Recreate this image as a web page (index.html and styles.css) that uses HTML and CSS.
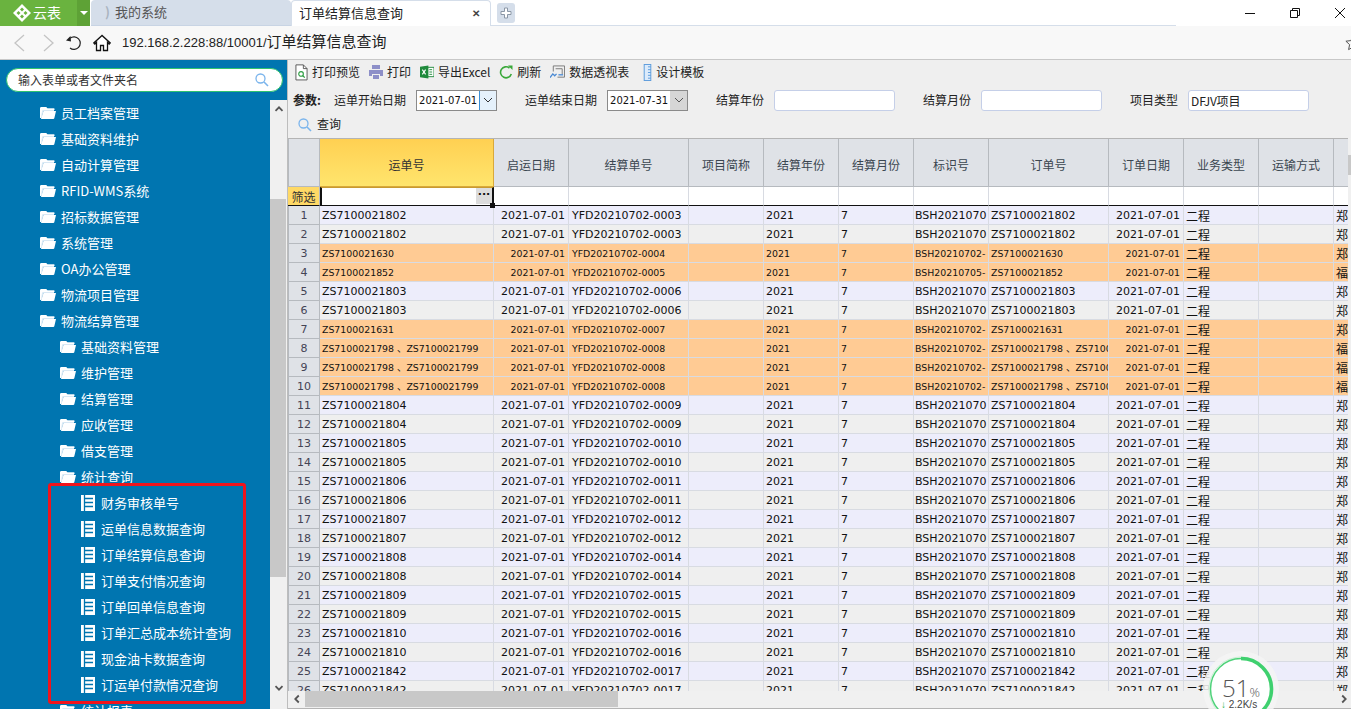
FILE: index.html
```html
<!DOCTYPE html>
<html lang="zh">
<head>
<meta charset="utf-8">
<title>订单结算信息查询</title>
<link rel="stylesheet" href="styles.css">
</head>
<body>
<svg class="defs" width="0" height="0">
  <symbol id="folder" viewBox="0 0 16 14">
    <path d="M1 1h5l1.500 1.500H14V5H3.500L1.500 12.500H1z" fill="#d8e8f4"/>
    <path d="M0 2.500C0 1.500.6 1 1.300 1H6l1.500 1.500H14.500V4H3.200C2.600 4 2.200 4.400 2 5L.9 12 0 12z" fill="#fff"/>
    <path d="M3.500 5H16l-1.700 7.300c-.1.500-.5.700-1 .7H1z" fill="#fff"/>
  </symbol>
  <symbol id="doc" viewBox="0 0 14 16">
    <rect width="14" height="16" fill="#fff"/>
    <path d="M3.500 0v16M3.500 3.500H12M3.500 7.500H12M3.500 11.500H12" stroke="#0075b0" stroke-width="1.300" fill="none"/>
  </symbol>
  <symbol id="chev" viewBox="0 0 10 10">
    <path d="M1.500 6.800 5 3.300l3.500 3.500" fill="none" stroke="#555" stroke-width="1.800"/>
  </symbol>
</svg>

<header class="tabbar">
  <div class="brand">
    <svg class="brand-logo" viewBox="0 0 18 18" width="18" height="18"><path d="M9 0l9 9-9 9-9-9z" fill="#fff"/><path d="M9 3.500l2 2-2 2-2-2zM3.500 9l2-2 2 2-2 2zM14.500 9l-2-2-2 2 2 2zM9 14.500l-2-2 2-2 2 2z" fill="#6ab33f"/></svg>
    <span>云表</span>
  </div>
  <div class="brand-drop"><i></i></div>
  <div class="tab tab-off"><span class="spin">)</span>我的系统</div>
  <div class="tab tab-on"><span>订单结算信息查询</span><b>✕</b></div>
  <div class="tab-add"><svg viewBox="0 0 12 12" width="12" height="12"><path d="M4.500 1h3v3.500H11v3H7.500V11h-3V7.500H1v-3h3.500z" fill="#fff" stroke="#8b97a6"/></svg></div>
  <div class="tab-fill"></div>
  <div class="winbtns">
    <svg viewBox="0 0 12 12" width="12" height="12"><path d="M1 6.500h10" stroke="#111"/></svg>
    <svg viewBox="0 0 12 12" width="12" height="12"><path d="M1.500 3.500h7v7h-7zM3.500 3.500v-2h7v7h-2" fill="none" stroke="#111"/></svg>
    <svg viewBox="0 0 12 12" width="12" height="12"><path d="M1 1l10 10M11 1L1 11" stroke="#111"/></svg>
  </div>
</header>

<nav class="addr">
  <svg class="nav-back" viewBox="0 0 14 18" width="14" height="18"><path d="M12 1L3 9l9 8" fill="none" stroke="#c4c4c4" stroke-width="1.300"/></svg>
  <svg class="nav-fwd" viewBox="0 0 14 18" width="14" height="18"><path d="M2 1l9 8-9 8" fill="none" stroke="#c4c4c4" stroke-width="1.300"/></svg>
  <svg class="nav-reload" viewBox="0 0 18 18" width="18" height="18"><path d="M5 4.200A6.300 6.300 0 1 1 5 14" fill="none" stroke="#222" stroke-width="1.200"/><path d="M1 6.500l4.500-4.500.5 5.500z" fill="#222"/></svg>
  <svg class="nav-home" viewBox="0 0 18 18" width="18" height="18"><path d="M9 1.500L.8 9l1 1L3.500 8.500V16.500h4v-5h3v5h4V8.500l1.700 1.500 1-1z" fill="#fff" stroke="#111" stroke-width="1.300"/></svg>
  <div class="url"><span class="url-num">192.168.2.228:88/10001/</span>订单结算信息查询</div>
  <svg class="star" viewBox="0 0 16 16" width="16" height="16"><path d="M8 1l2.100 4.600 5 .6-3.700 3.400 1 5L8 12.100 3.600 14.600l1-5L.9 6.200l5-.6z" fill="none" stroke="#555"/></svg>
</nav>

<div class="content">
  <aside class="side">
    <div class="searchwrap">
      <div class="search">
        <span>输入表单或者文件夹名</span>
        <svg viewBox="0 0 14 14" width="14" height="14"><circle cx="5.500" cy="5.500" r="4.500" fill="none" stroke="#7ab4ec" stroke-width="1.300"/><path d="M9 9l4 4" stroke="#7ab4ec" stroke-width="1.600"/></svg>
      </div>
    </div>
    <div class="side-body">
      <div class="tree">
        <div class="n l1"><svg class="fi"><use href="#folder"/></svg>员工档案管理</div>
        <div class="n l1"><svg class="fi"><use href="#folder"/></svg>基础资料维护</div>
        <div class="n l1"><svg class="fi"><use href="#folder"/></svg>自动计算管理</div>
        <div class="n l1"><svg class="fi"><use href="#folder"/></svg>RFID-WMS系统</div>
        <div class="n l1"><svg class="fi"><use href="#folder"/></svg>招标数据管理</div>
        <div class="n l1"><svg class="fi"><use href="#folder"/></svg>系统管理</div>
        <div class="n l1"><svg class="fi"><use href="#folder"/></svg>OA办公管理</div>
        <div class="n l1"><svg class="fi"><use href="#folder"/></svg>物流项目管理</div>
        <div class="n l1"><svg class="fi"><use href="#folder"/></svg>物流结算管理</div>
        <div class="n l2"><svg class="fi"><use href="#folder"/></svg>基础资料管理</div>
        <div class="n l2"><svg class="fi"><use href="#folder"/></svg>维护管理</div>
        <div class="n l2"><svg class="fi"><use href="#folder"/></svg>结算管理</div>
        <div class="n l2"><svg class="fi"><use href="#folder"/></svg>应收管理</div>
        <div class="n l2"><svg class="fi"><use href="#folder"/></svg>借支管理</div>
        <div class="n l2"><svg class="fi"><use href="#folder"/></svg>统计查询</div>
        <div class="n l3"><svg class="di"><use href="#doc"/></svg>财务审核单号</div>
        <div class="n l3"><svg class="di"><use href="#doc"/></svg>运单信息数据查询</div>
        <div class="n l3"><svg class="di"><use href="#doc"/></svg>订单结算信息查询</div>
        <div class="n l3"><svg class="di"><use href="#doc"/></svg>订单支付情况查询</div>
        <div class="n l3"><svg class="di"><use href="#doc"/></svg>订单回单信息查询</div>
        <div class="n l3"><svg class="di"><use href="#doc"/></svg>订单汇总成本统计查询</div>
        <div class="n l3"><svg class="di"><use href="#doc"/></svg>现金油卡数据查询</div>
        <div class="n l3"><svg class="di"><use href="#doc"/></svg>订运单付款情况查询</div>
        <div class="n l2"><svg class="fi"><use href="#folder"/></svg>统计报表</div>
        <div class="redbox"></div>
      </div>
      <div class="side-scroll">
        <svg class="arrow"><use href="#chev"/></svg>
        <div class="side-thumb"></div>
        <svg class="arrow down"><use href="#chev"/></svg>
      </div>
    </div>
  </aside>

  <main class="main">
    <div class="toolbar">
      <div class="tool"><svg viewBox="0 0 14 18" width="13" height="17"><path d="M1 .8h8l4 4V17H1z" fill="#fff" stroke="#555"/><path d="M9 .8v4h4" fill="none" stroke="#555"/><circle cx="6.500" cy="10.500" r="2.500" fill="none" stroke="#2f9e44" stroke-width="1.200"/><path d="M8.500 12.500l2 2" stroke="#2f9e44" stroke-width="1.400"/></svg>打印预览</div>
      <div class="tool"><svg viewBox="0 0 14 14" width="14" height="14"><path d="M3 0h8v4H3zM0 5h14v6h-3V9H3v2H0zM4 10h6v4H4z" fill="#8d8fc8"/></svg>打印</div>
      <div class="tool"><svg viewBox="0 0 15 14" width="14" height="14"><path d="M8 2h7v10H8z" fill="#fff" stroke="#1f8a3c"/><path d="M10 4.500h3M10 7h3M10 9.500h3" stroke="#1f8a3c"/><path d="M0 1.500L9 0v14L0 12.500z" fill="#1f8a3c"/><path d="M2.500 4.500l3.500 5M6 4.500l-3.500 5" stroke="#fff" stroke-width="1.200"/></svg>导出Excel</div>
      <div class="tool"><svg viewBox="0 0 14 14" width="14" height="14"><path d="M12.300 9A5.500 5.500 0 1 1 10.500 3" fill="none" stroke="#3aa83a" stroke-width="1.600"/><path d="M9 .5h4.500V5z" fill="#3aa83a"/></svg>刷新</div>
      <div class="tool"><svg viewBox="0 0 16 14" width="15" height="14"><path d="M3.500 .5h12v12H8M3.500 .5v6M6 3.500h7M13 3.500v6" fill="none" stroke="#777"/><path d="M0 13l3-4 2 2 2-2" fill="none" stroke="#4a8ad4" stroke-width="1.400"/><path d="M9 10h5" stroke="#4a8ad4" stroke-width="1.400"/></svg>数据透视表</div>
      <div class="tool tool-last"><svg viewBox="0 0 9 18" width="9" height="17"><rect x="1" y=".5" width="7" height="17" fill="#dcebfb" stroke="#5b9bdc"/><path d="M5 3h3M5 6h3M5 9h3M5 12h3M5 15h3" stroke="#5b9bdc"/></svg>设计模板</div>
    </div>

    <div class="params">
      <b class="plabel">参数:</b>
      <label class="f f-start">运单开始日期</label>
      <div class="combo combo-focus"><span>2021-07-01</span><i><svg viewBox="0 0 10 6" width="10" height="6"><path d="M1 1l4 4 4-4" fill="none" stroke="#333"/></svg></i></div>
      <label class="f f-end">运单结束日期</label>
      <div class="combo"><span>2021-07-31</span><i><svg viewBox="0 0 10 6" width="10" height="6"><path d="M1 1l4 4 4-4" fill="none" stroke="#555"/></svg></i></div>
      <label class="f f-next">结算年份</label>
      <div class="inp"></div>
      <label class="f f-next">结算月份</label>
      <div class="inp"></div>
      <label class="f f-next">项目类型</label>
      <div class="inp inp-val">DFJV项目</div>
    </div>

    <div class="query"><svg viewBox="0 0 14 14" width="14" height="14"><circle cx="5.500" cy="5.500" r="4.500" fill="none" stroke="#7ab4ec" stroke-width="1.300"/><path d="M9 9l4 4" stroke="#7ab4ec" stroke-width="1.600"/></svg>查询</div>

    <div class="sheet">
      <div class="sheet-top">
        <div class="clip">
          <table class="grid">
            <colgroup>
              <col class="c-h"><col class="c-w1"><col class="c-s"><col class="c-m"><col class="c-s"><col class="c-s"><col class="c-s"><col class="c-s"><col class="c-m"><col class="c-s"><col class="c-s"><col class="c-s"><col class="c-s">
            </colgroup>
            <thead>
              <tr class="head"><th class="rh"></th><th class="sel">运单号</th><th>启运日期</th><th>结算单号</th><th>项目简称</th><th>结算年份</th><th>结算月份</th><th>标识号</th><th>订单号</th><th>订单日期</th><th>业务类型</th><th>运输方式</th><th></th></tr>
              <tr class="filter"><th class="flabel">筛选</th><td class="fsel"><span class="dots">···</span><span class="handle"></span></td><td></td><td></td><td></td><td></td><td></td><td></td><td></td><td></td><td></td><td></td><td></td></tr>
            </thead>
            <tbody>
              <tr class="a"><th>1</th><td>ZS7100021802</td><td class="r">2021-07-01</td><td class="p">YFD20210702-0003</td><td></td><td>2021</td><td>7</td><td class="t">BSH2021070</td><td>ZS7100021802</td><td class="r">2021-07-01</td><td class="z">二程</td><td></td><td class="z">郑</td></tr>
              <tr><th>2</th><td>ZS7100021802</td><td class="r">2021-07-01</td><td class="p">YFD20210702-0003</td><td></td><td>2021</td><td>7</td><td class="t">BSH2021070</td><td>ZS7100021802</td><td class="r">2021-07-01</td><td class="z">二程</td><td></td><td class="z">郑</td></tr>
              <tr class="o"><th>3</th><td>ZS7100021630</td><td class="r">2021-07-01</td><td class="p">YFD20210702-0004</td><td></td><td>2021</td><td>7</td><td class="t">BSH20210702-</td><td>ZS7100021630</td><td class="r">2021-07-01</td><td class="z">二程</td><td></td><td class="z">郑</td></tr>
              <tr class="o"><th>4</th><td>ZS7100021852</td><td class="r">2021-07-01</td><td class="p">YFD20210702-0005</td><td></td><td>2021</td><td>7</td><td class="t">BSH20210705-</td><td>ZS7100021852</td><td class="r">2021-07-01</td><td class="z">二程</td><td></td><td class="z">福</td></tr>
              <tr class="a"><th>5</th><td>ZS7100021803</td><td class="r">2021-07-01</td><td class="p">YFD20210702-0006</td><td></td><td>2021</td><td>7</td><td class="t">BSH2021070</td><td>ZS7100021803</td><td class="r">2021-07-01</td><td class="z">二程</td><td></td><td class="z">郑</td></tr>
              <tr><th>6</th><td>ZS7100021803</td><td class="r">2021-07-01</td><td class="p">YFD20210702-0006</td><td></td><td>2021</td><td>7</td><td class="t">BSH2021070</td><td>ZS7100021803</td><td class="r">2021-07-01</td><td class="z">二程</td><td></td><td class="z">郑</td></tr>
              <tr class="o"><th>7</th><td>ZS7100021631</td><td class="r">2021-07-01</td><td class="p">YFD20210702-0007</td><td></td><td>2021</td><td>7</td><td class="t">BSH20210702-</td><td>ZS7100021631</td><td class="r">2021-07-01</td><td class="z">二程</td><td></td><td class="z">郑</td></tr>
              <tr class="o"><th>8</th><td>ZS7100021798 、ZS7100021799</td><td class="r">2021-07-01</td><td class="p">YFD20210702-0008</td><td></td><td>2021</td><td>7</td><td class="t">BSH20210702-</td><td>ZS7100021798 、ZS7100021799</td><td class="r">2021-07-01</td><td class="z">二程</td><td></td><td class="z">福</td></tr>
              <tr class="o"><th>9</th><td>ZS7100021798 、ZS7100021799</td><td class="r">2021-07-01</td><td class="p">YFD20210702-0008</td><td></td><td>2021</td><td>7</td><td class="t">BSH20210702-</td><td>ZS7100021798 、ZS7100021799</td><td class="r">2021-07-01</td><td class="z">二程</td><td></td><td class="z">福</td></tr>
              <tr class="o"><th>10</th><td>ZS7100021798 、ZS7100021799</td><td class="r">2021-07-01</td><td class="p">YFD20210702-0008</td><td></td><td>2021</td><td>7</td><td class="t">BSH20210702-</td><td>ZS7100021798 、ZS7100021799</td><td class="r">2021-07-01</td><td class="z">二程</td><td></td><td class="z">福</td></tr>
              <tr class="a"><th>11</th><td>ZS7100021804</td><td class="r">2021-07-01</td><td class="p">YFD20210702-0009</td><td></td><td>2021</td><td>7</td><td class="t">BSH2021070</td><td>ZS7100021804</td><td class="r">2021-07-01</td><td class="z">二程</td><td></td><td class="z">郑</td></tr>
              <tr><th>12</th><td>ZS7100021804</td><td class="r">2021-07-01</td><td class="p">YFD20210702-0009</td><td></td><td>2021</td><td>7</td><td class="t">BSH2021070</td><td>ZS7100021804</td><td class="r">2021-07-01</td><td class="z">二程</td><td></td><td class="z">郑</td></tr>
              <tr class="a"><th>13</th><td>ZS7100021805</td><td class="r">2021-07-01</td><td class="p">YFD20210702-0010</td><td></td><td>2021</td><td>7</td><td class="t">BSH2021070</td><td>ZS7100021805</td><td class="r">2021-07-01</td><td class="z">二程</td><td></td><td class="z">郑</td></tr>
              <tr><th>14</th><td>ZS7100021805</td><td class="r">2021-07-01</td><td class="p">YFD20210702-0010</td><td></td><td>2021</td><td>7</td><td class="t">BSH2021070</td><td>ZS7100021805</td><td class="r">2021-07-01</td><td class="z">二程</td><td></td><td class="z">郑</td></tr>
              <tr class="a"><th>15</th><td>ZS7100021806</td><td class="r">2021-07-01</td><td class="p">YFD20210702-0011</td><td></td><td>2021</td><td>7</td><td class="t">BSH2021070</td><td>ZS7100021806</td><td class="r">2021-07-01</td><td class="z">二程</td><td></td><td class="z">郑</td></tr>
              <tr><th>16</th><td>ZS7100021806</td><td class="r">2021-07-01</td><td class="p">YFD20210702-0011</td><td></td><td>2021</td><td>7</td><td class="t">BSH2021070</td><td>ZS7100021806</td><td class="r">2021-07-01</td><td class="z">二程</td><td></td><td class="z">郑</td></tr>
              <tr class="a"><th>17</th><td>ZS7100021807</td><td class="r">2021-07-01</td><td class="p">YFD20210702-0012</td><td></td><td>2021</td><td>7</td><td class="t">BSH2021070</td><td>ZS7100021807</td><td class="r">2021-07-01</td><td class="z">二程</td><td></td><td class="z">郑</td></tr>
              <tr><th>18</th><td>ZS7100021807</td><td class="r">2021-07-01</td><td class="p">YFD20210702-0012</td><td></td><td>2021</td><td>7</td><td class="t">BSH2021070</td><td>ZS7100021807</td><td class="r">2021-07-01</td><td class="z">二程</td><td></td><td class="z">郑</td></tr>
              <tr class="a"><th>19</th><td>ZS7100021808</td><td class="r">2021-07-01</td><td class="p">YFD20210702-0014</td><td></td><td>2021</td><td>7</td><td class="t">BSH2021070</td><td>ZS7100021808</td><td class="r">2021-07-01</td><td class="z">二程</td><td></td><td class="z">郑</td></tr>
              <tr><th>20</th><td>ZS7100021808</td><td class="r">2021-07-01</td><td class="p">YFD20210702-0014</td><td></td><td>2021</td><td>7</td><td class="t">BSH2021070</td><td>ZS7100021808</td><td class="r">2021-07-01</td><td class="z">二程</td><td></td><td class="z">郑</td></tr>
              <tr class="a"><th>21</th><td>ZS7100021809</td><td class="r">2021-07-01</td><td class="p">YFD20210702-0015</td><td></td><td>2021</td><td>7</td><td class="t">BSH2021070</td><td>ZS7100021809</td><td class="r">2021-07-01</td><td class="z">二程</td><td></td><td class="z">郑</td></tr>
              <tr><th>22</th><td>ZS7100021809</td><td class="r">2021-07-01</td><td class="p">YFD20210702-0015</td><td></td><td>2021</td><td>7</td><td class="t">BSH2021070</td><td>ZS7100021809</td><td class="r">2021-07-01</td><td class="z">二程</td><td></td><td class="z">郑</td></tr>
              <tr class="a"><th>23</th><td>ZS7100021810</td><td class="r">2021-07-01</td><td class="p">YFD20210702-0016</td><td></td><td>2021</td><td>7</td><td class="t">BSH2021070</td><td>ZS7100021810</td><td class="r">2021-07-01</td><td class="z">二程</td><td></td><td class="z">郑</td></tr>
              <tr><th>24</th><td>ZS7100021810</td><td class="r">2021-07-01</td><td class="p">YFD20210702-0016</td><td></td><td>2021</td><td>7</td><td class="t">BSH2021070</td><td>ZS7100021810</td><td class="r">2021-07-01</td><td class="z">二程</td><td></td><td class="z">郑</td></tr>
              <tr class="a"><th>25</th><td>ZS7100021842</td><td class="r">2021-07-01</td><td class="p">YFD20210702-0017</td><td></td><td>2021</td><td>7</td><td class="t">BSH2021070</td><td>ZS7100021842</td><td class="r">2021-07-01</td><td class="z">二程</td><td></td><td class="z">郑</td></tr>
              <tr><th>26</th><td>ZS7100021842</td><td class="r">2021-07-01</td><td class="p">YFD20210702-0017</td><td></td><td>2021</td><td>7</td><td class="t">BSH2021070</td><td>ZS7100021842</td><td class="r">2021-07-01</td><td class="z">二程</td><td></td><td class="z">郑</td></tr>
            </tbody>
          </table>
        </div>
        <div class="vscroll"><div class="vthumb"></div></div>
      </div>
      <div class="hscroll">
        <svg class="harrow"><use href="#chev"/></svg>
        <div class="hthumb"></div>
        <svg class="harrow right"><use href="#chev"/></svg>
      </div>
    </div>
  </main>
</div>

<div class="speed">
  <svg viewBox="0 0 80 80" width="80" height="80">
    <circle cx="40" cy="40" r="38" fill="#f4f4f4" fill-opacity=".85"/>
    <circle cx="40" cy="40" r="32" fill="#fff" stroke="#c9f0d3" stroke-width="1"/>
    <circle cx="40" cy="40" r="30.500" fill="none" stroke="#4fd27a" stroke-width="1.500"/>
    <path d="M40 9.500A30.500 30.500 0 0 1 40 70.500" fill="none" stroke="#3fd06f" stroke-width="3.500"/>
  </svg>
  <div class="speed-num">51<small>%</small></div>
  <div class="speed-rate"><i>↓</i> 2.2K/s</div>
</div>
</body>
</html>
```
FILE: styles.css
```css
* { box-sizing: border-box; }
html, body { margin: 0; padding: 0; }
body {
  width: 1351px;
  height: 709px;
  overflow: hidden;
  position: relative;
  display: flex;
  flex-direction: column;
  font: 12px/1.2 "Noto Sans CJK SC", "Liberation Sans", sans-serif;
  color: #222;
  background: #fff;
}
.defs { position: absolute; }

/* tab strip */
.tabbar { height: 26px; display: flex; align-items: stretch; flex: none; background: #fff; }
.brand { width: 77px; background: #6ab33f; color: #fff; display: flex; align-items: center; gap: 2px; padding: 0 0 1px 13px; font-size: 14px; }
.brand-logo { flex: none; }
.brand-drop { width: 13px; background: #5ea236; margin-right: 1px; display: flex; align-items: center; justify-content: center; }
.brand-drop i { border: 4px solid transparent; border-top-color: #fff; border-bottom: 0; width: 0; height: 0; }
.tab { width: 200px; font-size: 13px; display: flex; align-items: center; border-radius: 4px 4px 0 0; padding-bottom: 2px; }
.tab-off { background: #d5deea; color: #555; padding-left: 14px; border-bottom: 1px solid #c8d4e4; }
.spin { color: #aab4c0; width: 10px; font-weight: bold; }
.tab-on { background: #fff; color: #222; padding: 0 10px 2px 7px; justify-content: space-between; border: 1px solid #d5deea; border-bottom: 0; }
.tab-on b { font-size: 10px; color: #444; }
.tab-add { width: 18px; height: 20px; margin: 3px 0 3px 6px; background: #d5deea; border-radius: 3px; display: flex; align-items: center; justify-content: center; }
.tab-fill { width: 685px; border-bottom: 1px solid #d5deea; margin-left: -24px; }
.winbtns { flex: 1; display: flex; align-items: center; padding-left: 68px; gap: 33px; height: 25px; }

/* address bar */
.addr { height: 34px; flex: none; display: flex; align-items: center; background: #f8f8f8; border-bottom: 1px solid #c8c8c8; padding-left: 12px; }
.nav-fwd { margin-left: 16px; }
.nav-reload { margin-left: 9px; }
.nav-home { margin-left: 10px; }
.url { font-size: 15px; color: #222; margin-left: 11px; flex: 1; padding-bottom: 3px; }
.url-num { font: 13px "Liberation Sans", sans-serif; }
.star { margin-right: -10px; }

/* layout */
.content { flex: 1; display: flex; min-height: 0; }
.side { width: 287px; flex: none; display: flex; flex-direction: column; background: #0075b0; }
.searchwrap { height: 40px; flex: none; padding: 8px 4px 0 6px; }
.search { height: 24px; background: #fff; border: 1px solid #2fc36f; border-radius: 12px; display: flex; align-items: center; justify-content: space-between; padding: 0 13px 0 11px; color: #333; }
.side-body { flex: 1; display: flex; min-height: 0; }
.tree { width: 270px; position: relative; overflow: hidden; color: #fff; font-size: 13px; }
.n { height: 26px; display: flex; align-items: center; white-space: nowrap; }
.l1 { padding-left: 40px; }
.l2 { padding-left: 60px; }
.l3 { padding-left: 81px; }
.fi { width: 16px; height: 14px; margin-right: 5px; flex: none; }
.di { width: 14px; height: 16px; margin-right: 6px; flex: none; }
.redbox { position: absolute; left: 48px; top: 383px; width: 198px; height: 221px; border: 3px solid #f0141c; border-radius: 3px; }
.side-scroll { width: 17px; background: #f0f0f0; display: flex; flex-direction: column; position: relative; }
.arrow { width: 10px; height: 10px; margin: 4px 3px 0 4px; flex: none; }
.side-thumb { height: 378px; width: 16px; background: #c8c8c8; margin-top: 85px; }
.arrow.down { transform: rotate(180deg); margin-top: 106px; }

/* main */
.main { flex: 1; min-width: 0; display: flex; flex-direction: column; background: #efefef; border-left: 1px solid #bdbdbd; }
.toolbar { height: 27px; flex: none; display: flex; align-items: center; padding: 0 0 2px 7px; }
.tool { display: flex; align-items: center; gap: 4px; margin-right: 9px; color: #222; white-space: nowrap; }
.tool-last { margin-left: 5px; }
.params { height: 26px; flex: none; display: flex; align-items: center; padding-left: 5px; }
.plabel { width: 41px; flex: none; font-weight: bold; }
.f { flex: none; white-space: nowrap; }
.f-start { margin-right: 10px; }
.f-end { margin: 0 10px 0 28px; }
.f-next { margin: 0 10px 0 28px; }
.combo { width: 81px; height: 21px; border: 1px solid #8a8a8a; background: #fff; display: flex; flex: none; font: 10px "DejaVu Sans", sans-serif; color: #111; }
.combo span { flex: 1; padding: 4px 0 0 2px; }
.combo i { width: 17px; background: #d6d6d6; display: flex; align-items: center; justify-content: center; }
.combo-focus i { background: #e5f1fb; border-left: 1px solid #3a8fd6; }
.inp { width: 121px; height: 21px; border: 1px solid #c5cfe8; border-radius: 3px; background: #fff; flex: none; }
.inp-val { font: 12px "Noto Sans CJK SC", sans-serif; padding: 1px 0 0 2px; color: #222; letter-spacing: -.2px; }
.query { height: 25px; flex: none; display: flex; align-items: center; gap: 5px; padding: 0 0 2px 10px; }

.sheet { flex: 1; min-height: 0; display: flex; flex-direction: column; }
.sheet-top { flex: 1; min-height: 0; display: flex; }
.clip { width: 1060px; overflow: hidden; flex: none; border-top: 1px solid #b4b4b4; }
.vscroll { flex: 1; background: #f0f0f0; padding-top: 17px; }
.vthumb { height: 20px; background: #c8c8c8; }
.grid { table-layout: fixed; width: 1106px; border-collapse: separate; border-spacing: 0; font: 11px "DejaVu Sans", "Noto Sans CJK SC", sans-serif; color: #111; }
.c-h { width: 32px; }
.c-w1 { width: 174px; }
.c-s { width: 75px; }
.c-m { width: 120px; }
.grid th, .grid td { padding: 0 2px; white-space: nowrap; overflow: hidden; border-right: 1px solid #d8dbe2; border-bottom: 1px solid #d8dbe2; height: 19px; line-height: 17px; font-weight: normal; text-align: left; }
.grid .head th { height: 48px; padding-top: 3px; background: #dfe2e7; border-color: #b6babf; text-align: center; font: 12px "Noto Sans CJK SC", sans-serif; color: #3b4650; }
.grid .head .rh { border-left: 1px solid #b6babf; }
.grid .head .sel { background: linear-gradient(#ffd052, #ffe56d); border-color: #d9a93a; color: #333; }
.grid .filter th, .grid .filter td { background: #fff; height: 19px; border-bottom: 1px solid #111; }
.grid .filter .flabel { background: #ffd966; border-right: 1px solid #b6babf; text-align: center; font: 12px/17px "Noto Sans CJK SC", sans-serif; color: #333; padding: 0; }
.grid .fsel { position: relative; border: 2px solid #111; border-top: 1px solid #c89a30; overflow: visible; }
.dots { position: absolute; right: 0; top: 0; width: 16px; height: 16px; background: #dcdcdc; font: bold 11px/14px "DejaVu Sans", sans-serif; text-align: center; color: #111; }
.handle { position: absolute; right: -3px; bottom: -3px; width: 5px; height: 5px; background: #111; }
.grid tbody th { background: #dfe2e7; border-left: 1px solid #b6babf; border-right: 1px solid #b6babf; border-bottom-color: #b6babf; text-align: center; color: #445; font-size: 11px; padding: 0; }
.grid .a td { background: #ededfb; }
.grid tr td.z { font: 12px/17px "Noto Sans CJK SC", sans-serif; }
.grid td.r { text-align: right; padding-right: 3px; }
.grid td.p { padding-left: 3px; }
.grid td.t { padding-left: 1px; }
.grid .o td { background: #ffcb94; font-size: 9.400px; }
.grid .o td.z { font-size: 12px; }

.hscroll { height: 18px; flex: none; background: #f0f0f0; border-bottom: 1px solid #b4b4b4; display: flex; align-items: stretch; position: relative; }
.harrow { width: 10px; height: 10px; margin: 3px 3px 0 4px; transform: rotate(-90deg); flex: none; }
.hthumb { width: 313px; background: #c8c8c8; height: 16px; margin-top: 0; }
.harrow.right { transform: rotate(90deg); margin-left: auto; margin-right: 2px; }

/* network widget */
.speed { position: absolute; left: 1201px; top: 649px; width: 80px; height: 80px; }
.speed svg { display: block; }
.speed-num { position: absolute; left: 21px; top: 22px; width: 40px; font: 300 24px "Open Sans", "Liberation Sans", sans-serif; color: #555; white-space: nowrap; }
.speed-num small { font-size: 13px; }
.speed-rate { position: absolute; left: 20px; top: 50px; font: 10px "Liberation Sans", sans-serif; color: #444; white-space: nowrap; }
.speed-rate i { color: #2fb54e; font-style: normal; font-weight: bold; }
```
